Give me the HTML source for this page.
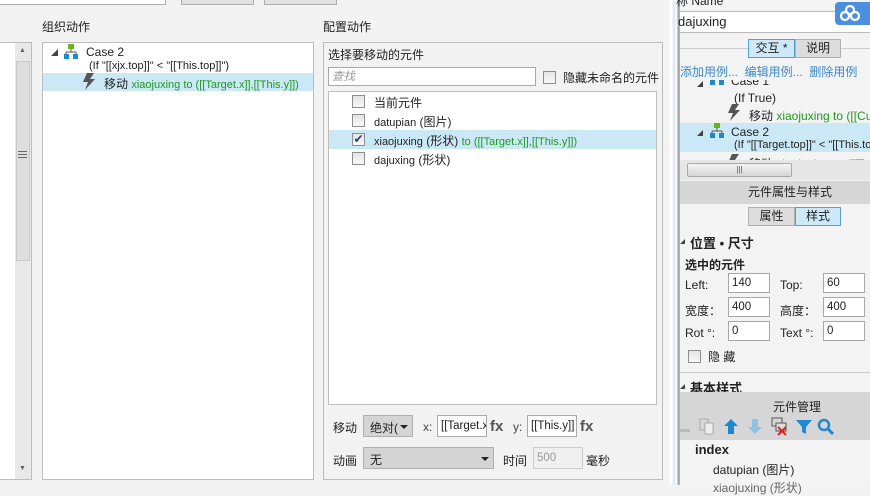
<!DOCTYPE html>
<html><head><meta charset="utf-8">
<style>
*{margin:0;padding:0;box-sizing:border-box}
body{width:870px;height:485px;overflow:hidden;background:#f2f2f2;font-family:"Liberation Sans","Noto Sans CJK SC",sans-serif;font-size:12px;color:#222;position:relative}
.a{position:absolute;white-space:nowrap}
.l{font-size:11px}
.box{position:absolute;background:#fff;border:1px solid #bdbdbd}
.cb{position:absolute;width:13px;height:13px;border:1px solid #8e8e8e;background:linear-gradient(#e4e4e4,#f8f8f8)}
.g{color:#1e9a1e}
.inp{position:absolute;background:#fff;border:1px solid #a8a8a8;height:20px;padding:0 3px;font-size:11.5px;line-height:18px}
.sel{position:absolute;background:#d4d4d4;border:1px solid #b0b0b0;height:22px;padding:3px 6px}
.tab{position:absolute;height:19px;border:1px solid #b0b0b0;background:#dcdcdc;text-align:center;line-height:17px}
.tab.on{background:#cde8f6;border-color:#4ba3d6}
</style></head><body>
<div class="box" style="left:-2px;top:-5px;width:168px;height:10px;border-color:#aaa"></div>
<div class="a" style="left:181px;top:-3px;width:73px;height:8px;background:#e1e1e1;border:1px solid #adadad"></div>
<div class="a" style="left:264px;top:-3px;width:73px;height:8px;background:#e1e1e1;border:1px solid #adadad"></div>

<div class="a" style="left:42px;top:18px">组织动作</div>
<div class="a" style="left:323px;top:18px">配置动作</div>

<div class="box" style="left:-2px;top:42px;width:34px;height:438px"></div>
<div class="a" style="left:15px;top:43px;width:16px;height:436px;background:#e8e8e8"></div>
<div class="a" style="left:16px;top:61px;width:14px;height:200px;background:#dedede;border:1px solid #c8c8c8"></div>
<div class="a" style="left:19px;top:47px;font-size:7px;color:#666">▲</div>
<div class="a" style="left:19px;top:465px;font-size:7px;color:#666">▼</div>
<div class="a" style="left:18px;top:151px;width:9px;height:7px;border-top:1px solid #666;border-bottom:1px solid #666"></div>
<div class="a" style="left:18px;top:154px;width:9px;height:1px;background:#666"></div>

<div class="box" style="left:42px;top:42px;width:272px;height:438px"></div>
<div class="a" style="left:51px;top:49px;width:0;height:0;border-left:7px solid transparent;border-bottom:7px solid #444"></div>
<svg class="a" style="left:64px;top:44px" width="15" height="16"><rect x="4" y="0" width="6" height="5" fill="#6bb418"/><path d="M7 5v3M2 8h10M2 8v2M12 8v2" stroke="#555" fill="none"/><rect x="0" y="10" width="5" height="5" fill="#1b8ad3"/><rect x="9" y="10" width="5" height="5" fill="#1b8ad3"/></svg>
<div class="a" style="left:86px;top:45px">Case 2</div>
<div class="a l" style="left:89px;top:60px">(If "[[xjx.top]]" &lt; "[[This.top]]")</div>
<div class="a" style="left:43px;top:73px;width:270px;height:18px;background:#cbe8f6"></div>
<svg class="a" style="left:82px;top:73px" width="14" height="17"><path d="M5 0h7l-4 6h5L3 17l3-8H1z" fill="#555"/></svg>
<div class="a" style="left:104px;top:75px">移动 <span class="g l">xiaojuxing to ([[Target.x]],[[This.y]])</span></div>

<div class="a" style="left:323px;top:42px;width:340px;height:438px;border:1px solid #bdbdbd;background:#f2f2f2"></div>
<div class="a" style="left:328px;top:46px">选择要移动的元件</div>
<div class="inp" style="left:328px;top:67px;width:208px;height:19px;font-style:italic;color:#999">查找</div>
<div class="cb" style="left:543px;top:71px"></div>
<div class="a" style="left:563px;top:69px">隐藏未命名的元件</div>
<div class="box" style="left:328px;top:91px;width:329px;height:314px"></div>
<div class="a" style="left:329px;top:130px;width:327px;height:19px;background:#cbe8f6"></div>
<div class="cb" style="left:352px;top:95px"></div><div class="a" style="left:374px;top:94px">当前元件</div>
<div class="cb" style="left:352px;top:114px"></div><div class="a" style="left:374px;top:113px"><span class="l">datupian</span> (图片)</div>
<div class="cb" style="left:352px;top:133px;color:#2a3a8a;font-size:12px;line-height:11px;text-align:center">✔</div><div class="a" style="left:374px;top:132px"><span class="l">xiaojuxing</span> (形状) <span class="g l">to ([[Target.x]],[[This.y]])</span></div>
<div class="cb" style="left:352px;top:152px"></div><div class="a" style="left:374px;top:151px"><span class="l">dajuxing</span> (形状)</div>

<div class="a" style="left:333px;top:419px">移动</div>
<div class="sel" style="left:363px;top:415px;width:50px">绝对(<span style="position:absolute;right:4px;top:9px;border-left:4px solid transparent;border-right:4px solid transparent;border-top:4px solid #222"></span></div>
<div class="a" style="left:423px;top:420px;color:#444">x:</div>
<div class="inp" style="left:437px;top:415px;width:50px;height:22px;line-height:20px;overflow:hidden">[[Target.x]]</div>
<div class="a" style="left:490px;top:418px;font-weight:bold;font-size:15px;color:#555">fx</div>
<div class="a" style="left:513px;top:420px;color:#444">y:</div>
<div class="inp" style="left:527px;top:415px;width:50px;height:22px;line-height:20px;overflow:hidden">[[This.y]]</div>
<div class="a" style="left:580px;top:418px;font-weight:bold;font-size:15px;color:#555">fx</div>
<div class="a" style="left:333px;top:452px">动画</div>
<div class="sel" style="left:363px;top:447px;width:131px">无<span style="position:absolute;right:4px;top:9px;border-left:4px solid transparent;border-right:4px solid transparent;border-top:4px solid #222"></span></div>
<div class="a" style="left:503px;top:452px">时间</div>
<div class="inp" style="left:533px;top:447px;width:50px;height:22px;line-height:20px;background:#f0f0f0;border-color:#ccc;color:#999">500</div>
<div class="a" style="left:586px;top:452px">毫秒</div>

<div class="a" style="left:668px;top:0;width:12px;height:485px;background:linear-gradient(90deg,#f2f2f2,#fff 30%,#d8e4f2 50%,#fff 70%,#8a8a8a 92%,#ddd)"></div>

<div class="a" style="left:680px;top:0;width:190px;height:485px;background:#f3f3f3"></div>
<div class="a" style="left:676px;top:-8px">称 Name</div>
<div class="a" style="left:680px;top:11px;width:190px;height:22px;background:#fff;border-top:1px solid #bbb;border-bottom:1px solid #bbb"></div>
<div class="a" style="left:678px;top:14px;font-size:13px">dajuxing</div>
<div class="a" style="left:835px;top:2px;width:40px;height:23px;background:#4a8fe0;border-radius:4px"></div>
<svg class="a" style="left:840px;top:5px" width="20" height="17"><circle cx="10" cy="5" r="4" fill="none" stroke="#fff" stroke-width="2.2"/><circle cx="5" cy="11" r="4" fill="none" stroke="#fff" stroke-width="2.2"/><circle cx="15" cy="11" r="4" fill="none" stroke="#fff" stroke-width="2.2"/></svg>
<div class="a" style="left:680px;top:48px;width:190px;height:1px;background:#ccc"></div>
<div class="tab on" style="left:748px;top:39px;width:47px">交互 *</div>
<div class="tab" style="left:795px;top:39px;width:46px">说明</div>
<div class="a" style="left:680px;top:63px;color:#3a8ad0">添加用例... &nbsp;编辑用例... &nbsp;删除用例</div>
<div class="a" style="left:680px;top:80px;width:190px;height:80px;overflow:hidden">
 <div class="a" style="left:0;top:43px;width:190px;height:29px;background:#cbe8f6"></div>
 <div class="a" style="left:51px;top:-6px">Case 1</div>
 <div class="a" style="left:17px;top:1px;border-left:6px solid transparent;border-bottom:6px solid #444"></div>
 <div class="a" style="left:30px;top:0;width:5px;height:5px;background:#1b8ad3"></div><div class="a" style="left:39px;top:0;width:5px;height:5px;background:#1b8ad3"></div>
 <div class="a" style="left:54px;top:11px">(If True)</div>
 <svg class="a" style="left:47px;top:24px" width="14" height="17"><path d="M5 0h7l-4 6h5L3 17l3-8H1z" fill="#555"/></svg>
 <div class="a" style="left:69px;top:27px">移动 <span class="g">xiaojuxing to ([[Curs</span></div>
 <div class="a" style="left:17px;top:50px;border-left:6px solid transparent;border-bottom:6px solid #444"></div>
 <svg class="a" style="left:30px;top:43px" width="15" height="16"><rect x="4" y="0" width="6" height="5" fill="#6bb418"/><path d="M7 5v3M2 8h10M2 8v2M12 8v2" stroke="#555" fill="none"/><rect x="0" y="10" width="5" height="5" fill="#1b8ad3"/><rect x="9" y="10" width="5" height="5" fill="#1b8ad3"/></svg>
 <div class="a" style="left:51px;top:45px">Case 2</div>
 <div class="a l" style="left:54px;top:59px">(If "[[Target.top]]" &lt; "[[This.to</div>
 <svg class="a" style="left:47px;top:74px" width="14" height="17"><path d="M5 0h7l-4 6h5L3 17l3-8H1z" fill="#555"/></svg>
 <div class="a" style="left:69px;top:75px">移动 <span class="g">xiaojuxing to ([[Targe</span></div>
</div>
<div class="a" style="left:680px;top:160px;width:190px;height:20px;background:#e6e6e6"></div>
<div class="a" style="left:687px;top:163px;width:105px;height:14px;background:linear-gradient(#f4f4f4,#d6d6d6);border:1px solid #aaa;border-radius:2px;text-align:center;font-size:8px;line-height:12px;color:#555">|||</div>
<div class="a" style="left:680px;top:181px;width:190px;height:23px;background:#d6d6d6;text-align:center;line-height:23px;padding-left:30px">元件属性与样式</div>
<div class="tab" style="left:748px;top:207px;width:47px">属性</div>
<div class="tab on" style="left:795px;top:207px;width:46px">样式</div>
<div class="a" style="left:680px;top:239px;border-left:5px solid transparent;border-bottom:5px solid #444"></div>
<div class="a" style="left:690px;top:233px;font-weight:bold;font-size:13px">位置 • 尺寸</div>
<div class="a" style="left:685px;top:256px;font-weight:bold">选中的元件</div>
<div class="a" style="left:685px;top:278px">Left:</div><div class="inp" style="left:728px;top:273px;width:42px;height:20px">140</div>
<div class="a" style="left:780px;top:278px">Top:</div><div class="inp" style="left:823px;top:273px;width:42px;height:20px">60</div>
<div class="a" style="left:685px;top:302px">宽度：</div><div class="inp" style="left:728px;top:297px;width:42px;height:20px">400</div>
<div class="a" style="left:780px;top:302px">高度：</div><div class="inp" style="left:823px;top:297px;width:42px;height:20px">400</div>
<div class="a" style="left:685px;top:326px">Rot °:</div><div class="inp" style="left:728px;top:321px;width:42px;height:20px">0</div>
<div class="a" style="left:780px;top:326px">Text °:</div><div class="inp" style="left:823px;top:321px;width:42px;height:20px">0</div>
<div class="cb" style="left:688px;top:350px"></div><div class="a" style="left:708px;top:348px">隐 藏</div>
<div class="a" style="left:680px;top:372px;width:190px;height:1px;background:#ccc"></div>
<div class="a" style="left:680px;top:384px;border-left:5px solid transparent;border-bottom:5px solid #444"></div>
<div class="a" style="left:690px;top:378px;font-weight:bold;font-size:13px;height:14px;overflow:hidden">基本样式</div>
<div class="a" style="left:680px;top:392px;width:190px;height:48px;background:#d6d6d6"></div>
<div class="a" style="left:773px;top:398px">元件管理</div>
<svg class="a" style="left:680px;top:417px" width="190" height="20">
<rect x="0" y="12" width="10" height="3" fill="#bbb"/>
<rect x="20" y="2" width="8" height="11" fill="none" stroke="#aaa"/><rect x="25" y="6" width="8" height="11" fill="#eee" stroke="#aaa"/>
<path d="M51 2l7 7h-4v8h-6v-8h-4z" fill="#1a8ad6"/>
<path d="M75 17l7-7h-4V2h-6v8h-4z" fill="#8ec2e8"/>
<rect x="92" y="1" width="10" height="8" fill="none" stroke="#555"/><rect x="96" y="6" width="10" height="8" fill="#ddd" stroke="#555"/><path d="M98 10l8 8M106 10l-8 8" stroke="#e02020" stroke-width="2"/>
<path d="M116 3h16l-6 7v7l-4-2v-5z" fill="#1a8ad6"/>
<circle cx="144" cy="8" r="5" fill="none" stroke="#1a8ad6" stroke-width="2.5"/><path d="M148 12l5 5" stroke="#1a8ad6" stroke-width="3"/>
</svg>
<div class="a" style="left:695px;top:442px;font-weight:bold;font-size:13px">index</div>
<div class="a" style="left:713px;top:461px">datupian (图片)</div>
<div class="a" style="left:713px;top:479px;color:#666">xiaojuxing (形状)</div>
</body></html>
